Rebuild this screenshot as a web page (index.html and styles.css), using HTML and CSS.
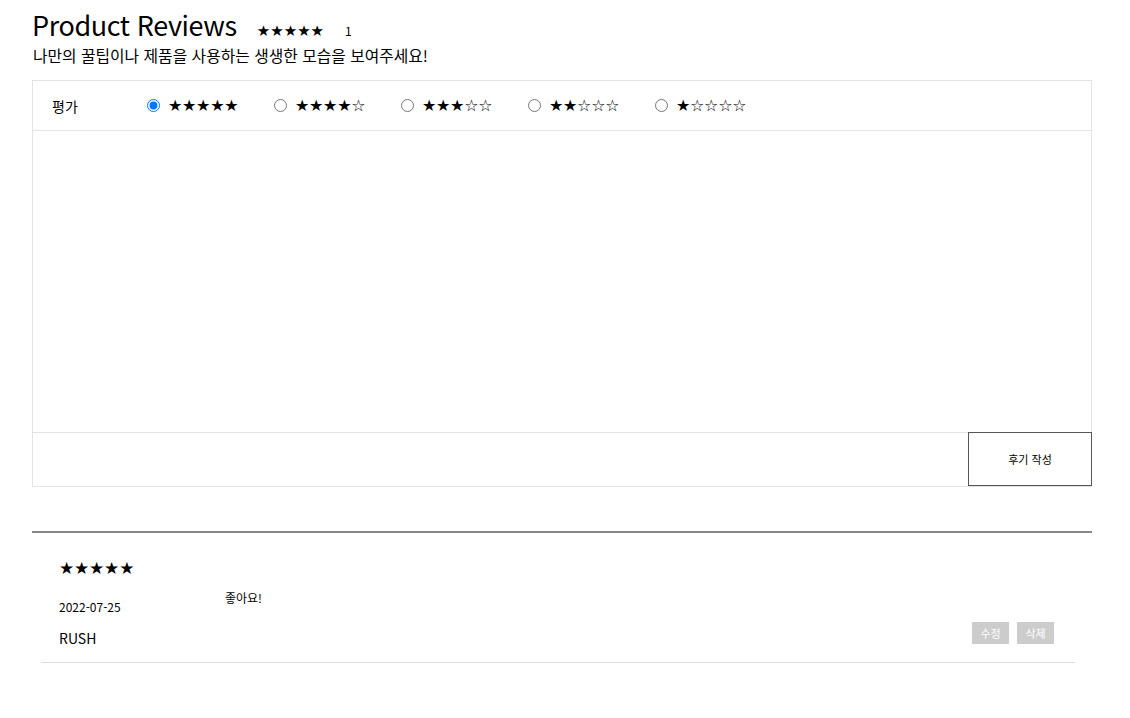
FILE: index.html
```html
<!DOCTYPE html>
<html lang="ko">
<head>
<meta charset="utf-8">
<title>Product Reviews</title>
<link rel="stylesheet" href="styles.css">
</head>
<body>
<div class="page">
  <div class="head">
    <h1 class="title">Product Reviews</h1>
    <span class="head-stars">★★★★★</span>
    <span class="head-count">1</span>
  </div>
  <p class="subtitle">나만의 꿀팁이나 제품을 사용하는 생생한 모습을 보여주세요!</p>

  <form class="write-box">
    <div class="rate-row">
      <span class="rate-label">평가</span>
      <label class="opt"><input type="radio" name="r" checked><span class="opt-stars">★★★★★</span></label>
      <label class="opt"><input type="radio" name="r"><span class="opt-stars">★★★★☆</span></label>
      <label class="opt"><input type="radio" name="r"><span class="opt-stars">★★★☆☆</span></label>
      <label class="opt"><input type="radio" name="r"><span class="opt-stars">★★☆☆☆</span></label>
      <label class="opt"><input type="radio" name="r"><span class="opt-stars">★☆☆☆☆</span></label>
    </div>
    <textarea class="text"></textarea>
    <div class="submit-row">
      <button type="button" class="submit">후기 작성</button>
    </div>
  </form>

  <div class="list">
    <div class="review">
      <div class="review-left">
        <div class="review-stars">★★★★★</div>
        <div class="review-date">2022-07-25</div>
        <div class="review-user">RUSH</div>
      </div>
      <div class="review-body">좋아요!</div>
      <div class="review-actions">
        <button type="button" class="act">수정</button>
        <button type="button" class="act">삭제</button>
      </div>
    </div>
  </div>
</div>
</body>
</html>
```

FILE: styles.css
```css
* { box-sizing: border-box; }
body {
  margin: 0;
  font-family: "Noto Sans CJK KR", "Noto Sans", sans-serif;
  color: #000;
  background: #fff;
}
.page {
  width: 1060px;
  margin-left: 32px;
  padding-top: 8px;
}
.head {
  display: flex;
  align-items: baseline;
  height: 34px;
}
.title {
  margin: 0;
  font-size: 27px;
  font-weight: 400;
  line-height: 34px;
  letter-spacing: -0.4px;
}
.head-stars {
  margin-left: 20px;
  font-family: "DejaVu Sans", sans-serif;
  font-size: 15px;
}
.head-count {
  margin-left: 21px;
  font-size: 12px;
}
.subtitle {
  margin: 0;
  padding-top: 3px;
  font-size: 15.8px;
  line-height: 22px;
  padding-left: 1px;
  letter-spacing: 0;
}
.write-box {
  margin-top: 13px;
  border: 1px solid #e3e3e3;
  display: flex;
  flex-direction: column;
}
.rate-row {
  display: flex;
  align-items: center;
  height: 50px;
  padding-left: 19px;
  border-bottom: 1px solid #e3e3e3;
  font-size: 14px;
}
.rate-label {
  width: 95px;
}
.opt {
  display: flex;
  align-items: center;
  width: 127px;
}
.opt input {
  margin: 0 8px 0 0;
  width: 13px;
  height: 13px;
}
.opt-stars {
  font-family: "DejaVu Sans", sans-serif;
  font-size: 16px;
  letter-spacing: -0.3px;
}
.text {
  display: block;
  height: 301px;
  border: 0;
  resize: none;
  outline: none;
  width: 100%;
}
.submit-row {
  display: flex;
  justify-content: flex-end;
  border-top: 1px solid #e3e3e3;
  height: 54px;
}
.submit {
  width: 124px;
  height: 54px;
  margin-top: -1px;
  margin-right: -1px;
  background: #fff;
  border: 1px solid #555;
  font-family: inherit;
  font-size: 11px;
  color: #000;
}
.list {
  margin-top: 44px;
  border-top: 2px solid #888;
}
.review {
  display: flex;
  margin: 0 17px 0 9px;
  padding: 24px 21px 14px 18px;
  border-bottom: 1px solid #ddd;
}
.review-left {
  width: 166px;
}
.review-stars {
  font-family: "DejaVu Sans", sans-serif;
  font-size: 17px;
  letter-spacing: -0.2px;
  line-height: 22px;
}
.review-date {
  margin-top: 19px;
  font-size: 12px;
  line-height: 18px;
}
.review-user {
  margin-top: 12px;
  font-size: 14px;
  line-height: 20px;
}
.review-body {
  flex: 1;
  font-size: 12px;
  padding-top: 32px;
}
.review-actions {
  display: flex;
  gap: 8px;
  align-items: flex-start;
  padding-top: 65px;
}
.act {
  width: 37px;
  height: 22px;
  padding: 0;
  border: 0;
  background: #ccc;
  color: #fff;
  font-family: inherit;
  font-size: 11px;
}
```
